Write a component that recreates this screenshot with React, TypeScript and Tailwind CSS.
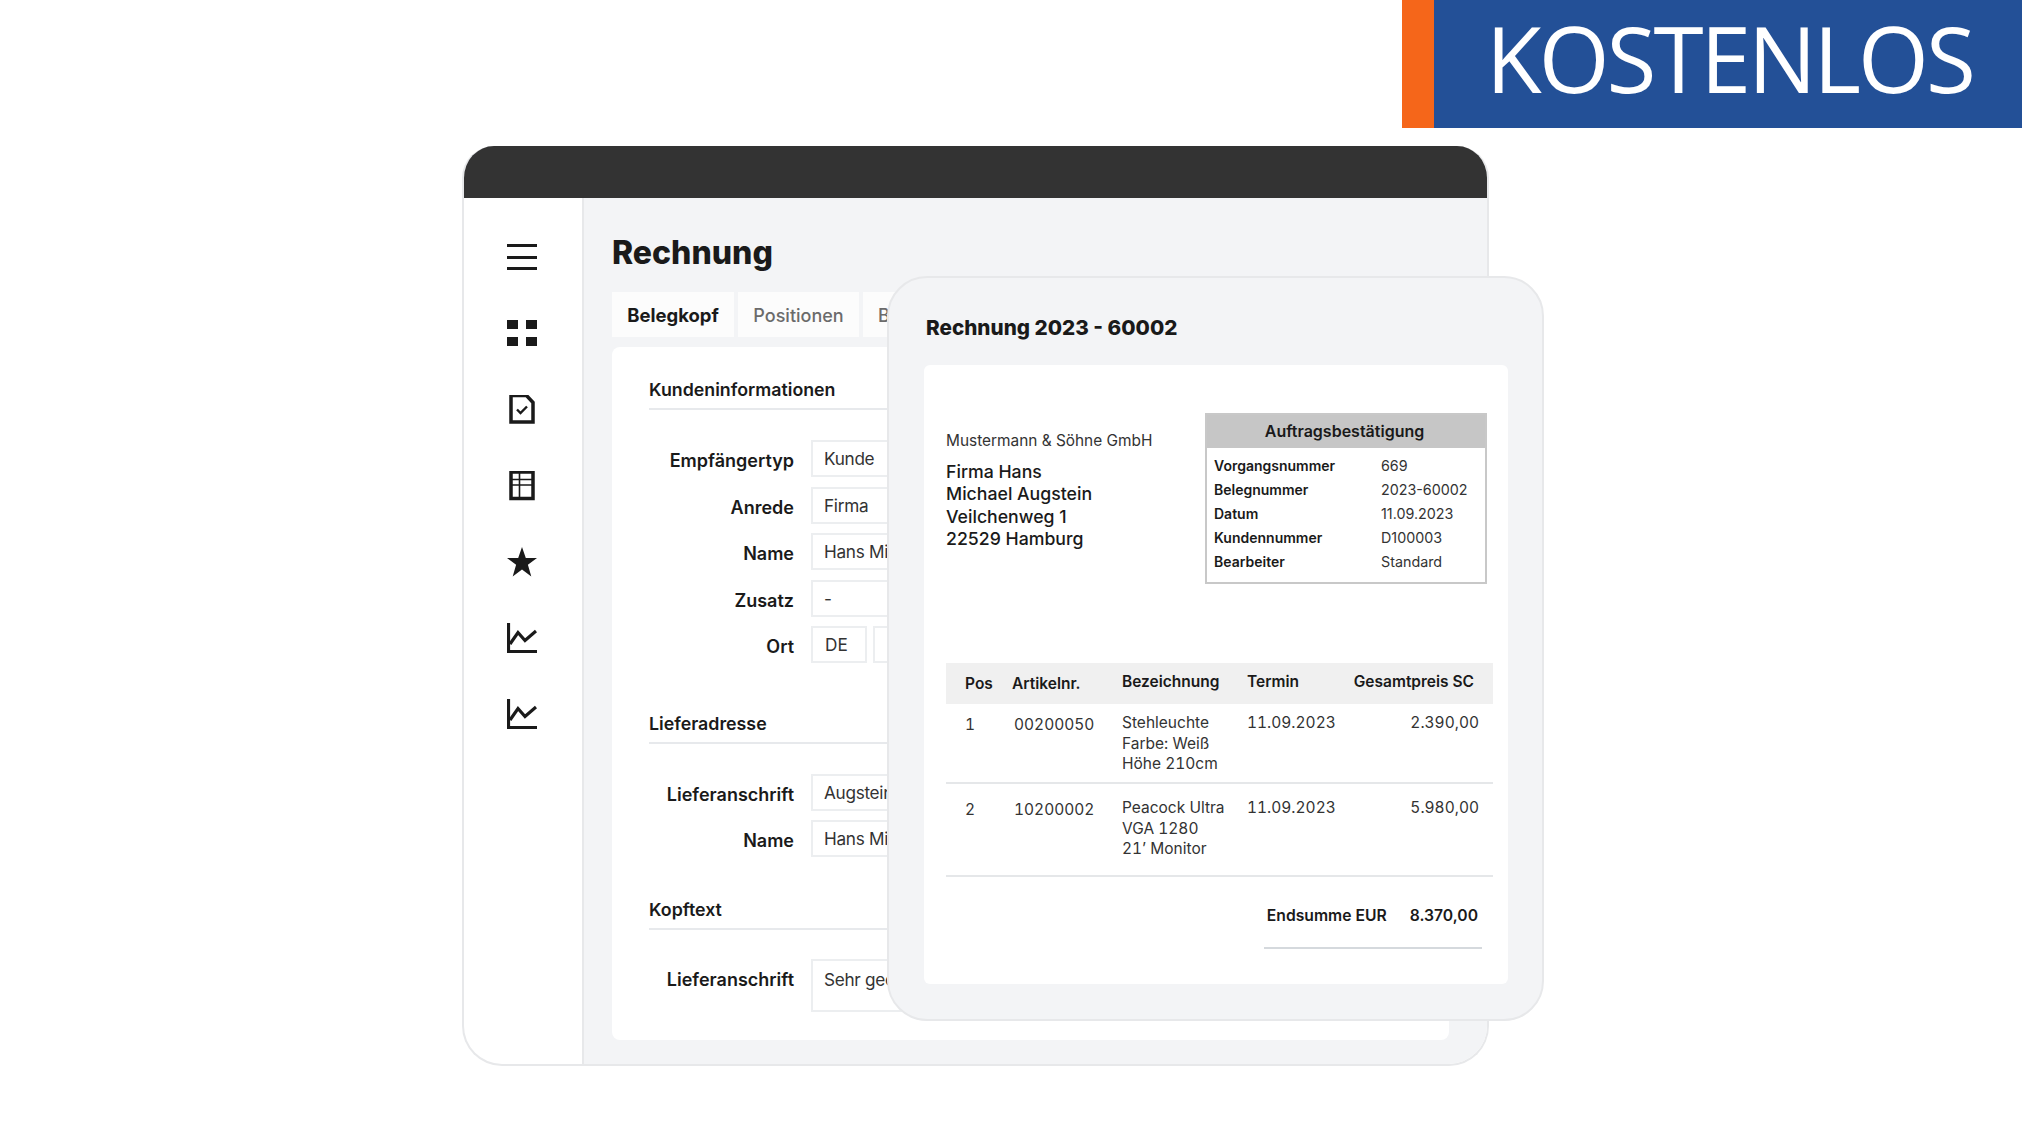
const kunde = [
  { label: 'Empfängertyp', value: 'Kunde' },
  { label: 'Anrede', value: 'Firma' },
  { label: 'Name', value: 'Hans Michael Augstein' },
  { label: 'Zusatz', value: '-' },
]

const belegDaten = [
  ['Vorgangsnummer', '669'],
  ['Belegnummer', '2023-60002'],
  ['Datum', '11.09.2023'],
  ['Kundennummer', 'D100003'],
  ['Bearbeiter', 'Standard'],
]

function MenuIcon() {
  return (
    <svg width="30" height="30" viewBox="0 0 30 30" fill="#1a1a1a">
      <rect x="0" y="1" width="30" height="3" />
      <rect x="0" y="13" width="30" height="3" />
      <rect x="0" y="24" width="30" height="3" />
    </svg>
  )
}

function GridIcon() {
  return (
    <svg width="30" height="30" viewBox="0 0 30 30" fill="#1a1a1a">
      <rect x="0" y="1" width="11" height="9" />
      <rect x="19" y="1" width="11" height="9" />
      <rect x="0" y="18" width="11" height="9" />
      <rect x="19" y="18" width="11" height="9" />
    </svg>
  )
}

function DocIcon() {
  return (
    <svg width="30" height="30" viewBox="0 1 30 30" fill="none" stroke="#1a1a1a">
      <path d="M4 1.5H19.5L26 8.5V28H4Z" strokeWidth="3.5" />
      <path d="M10 15.5L13.5 19L20 12.5" strokeWidth="2.4" />
    </svg>
  )
}

function TableIcon() {
  return (
    <svg width="30" height="30" viewBox="0 1 30 30" fill="none" stroke="#1a1a1a">
      <rect x="4" y="2" width="22" height="26.5" strokeWidth="3.5" />
      <path d="M4 9.5H26M4 15H26M12.5 2V28" strokeWidth="1.6" />
    </svg>
  )
}

function StarIcon() {
  return (
    <svg width="30" height="30" viewBox="0 0 30 30" fill="#1a1a1a">
      <path d="M15 0L18.8 10.9H30L20.9 17.8L24.3 29.5L15 22.4L5.7 29.5L9.1 17.8L0 10.9H11.2Z" />
    </svg>
  )
}

function ChartIcon() {
  return (
    <svg width="30" height="30" viewBox="0 0 30 30" fill="none" stroke="#1a1a1a" strokeWidth="3.2">
      <path d="M1.5 0V28.5H30" />
      <path d="M3 21L11 9.5L18 17.5L29 8" />
    </svg>
  )
}

function SectionTitle({ children }: { children: string }) {
  return (
    <div className="border-b-2 border-[#e7e9ec] pb-[6px] text-[17.8px] leading-[24px] font-semibold text-[#1a1a1a]">
      {children}
    </div>
  )
}

function FormRow({ label, value, tall }: { label: string; value: string; tall?: boolean }) {
  return (
    <div className="flex">
      <div className="w-[145px] pt-[8px] text-right text-[18px] leading-[26px] font-semibold text-[#1a1a1a]">
        {label}
      </div>
      <div
        className={`ml-[17px] w-[480px] border-2 border-[#eceef0] pl-[11px] text-[17.2px] tracking-[-0.3px] whitespace-nowrap text-[#333] ${
          tall ? 'h-[53px] pt-[5px] leading-[28px]' : 'h-[37px] pt-[1px] leading-[31px]'
        }`}
      >
        {value}
      </div>
    </div>
  )
}

function Position({ pos, nr, lines, preis }: { pos: string; nr: string; lines: string[]; preis: string }) {
  return (
    <div className="grid grid-cols-[66px_110px_125px_1fr] text-[15.5px] leading-[20.5px] text-[#333] tabular-nums">
      <div className="pt-[2px] pl-[19px]">{pos}</div>
      <div className="pt-[2px] pl-[2px]">{nr}</div>
      <div>
        {lines.map((l) => (
          <div key={l}>{l}</div>
        ))}
      </div>
      <div className="flex justify-between pr-[14px]">
        <span>11.09.2023</span>
        <span>{preis}</span>
      </div>
    </div>
  )
}

export default function App() {
  return (
    <div className="h-[1128px] overflow-hidden bg-white font-['Inter',sans-serif]">
      <div className="flex justify-end">
        <div className="h-[128px] w-[32px] bg-[#f5661a]" />
        <div className="h-[128px] w-[588px] bg-[#235097] pl-[52px] font-['Open_Sans',sans-serif] text-[91px] leading-[116px] tracking-[-3px] text-white">
          KOSTENLOS
        </div>
      </div>

      <div className="relative mt-[18px] ml-[462px] w-[1027px]">
        <div className="h-[920px] overflow-hidden rounded-t-[32px] rounded-b-[40px] border-2 border-t-0 border-[#e7e8ea]">
          <div className="-mx-[2px] h-[52px] bg-[#333333]" />
          <div className="flex h-[868px]">
            <div className="flex w-[120px] shrink-0 flex-col items-center gap-[46px] border-r-2 border-[#e7e8ea] pt-[45px] pr-[2px]">
              <MenuIcon />
              <GridIcon />
              <DocIcon />
              <TableIcon />
              <StarIcon />
              <ChartIcon />
              <ChartIcon />
            </div>
            <div className="flex-1 bg-[#f3f4f6] pt-[35px] pr-[38px] pl-[28px]">
              <h1 className="h-[40px] text-[32px] leading-[40px] font-extrabold text-[#1a1a1a]">Rechnung</h1>
              <div className="mt-[19px] flex gap-[4px] leading-[47px]">
                <div className="h-[45px] w-[122px] bg-[#fcfcfc] text-center text-[18.5px] font-bold text-[#1a1a1a]">
                  Belegkopf
                </div>
                <div className="h-[45px] w-[121px] bg-[#fcfcfc] text-center text-[18px] font-medium text-[#6b6b6b]">
                  Positionen
                </div>
                <div className="h-[45px] w-[121px] bg-[#fcfcfc] pl-[15px] text-[18px] font-medium text-[#6b6b6b]">
                  Belegtext
                </div>
              </div>
              <div className="mt-[10px] h-[693px] rounded-[8px] bg-white pt-[31px] pr-[30px] pl-[37px]">
                <SectionTitle>Kundeninformationen</SectionTitle>
                <div className="mt-[30px] flex flex-col gap-[9.5px]">
                  {kunde.map((k) => (
                    <FormRow key={k.label} label={k.label} value={k.value} />
                  ))}
                  <div className="flex">
                    <div className="w-[145px] pt-[8px] text-right text-[18px] leading-[26px] font-semibold text-[#1a1a1a]">
                      Ort
                    </div>
                    <div className="ml-[17px] h-[37px] w-[56px] border-2 border-[#eceef0] pt-[1px] pl-[12px] text-[17.2px] leading-[31px] text-[#333]">
                      DE
                    </div>
                    <div className="ml-[6px] h-[37px] w-[300px] border-2 border-[#eceef0]" />
                  </div>
                </div>

                <div className="mt-[49px]">
                  <SectionTitle>Lieferadresse</SectionTitle>
                </div>
                <div className="mt-[30px] flex flex-col gap-[9px]">
                  <FormRow label="Lieferanschrift" value="Augstein Michael" />
                  <FormRow label="Name" value="Hans Michael Augstein" />
                </div>

                <div className="mt-[41px]">
                  <SectionTitle>Kopftext</SectionTitle>
                </div>
                <div className="mt-[29px]">
                  <FormRow label="Lieferanschrift" value="Sehr geehrte Damen und Herren" tall />
                </div>
              </div>
            </div>
          </div>
        </div>

        {/* Beleg-Vorschau liegt über dem Fenster */}
        <div className="absolute top-[130px] left-[425px] h-[745px] w-[657px] rounded-[40px] border-2 border-[#e7e8ea] bg-[#f3f4f6] pr-[34px] pl-[35px]">
          <div className="h-[87px] pt-[36px] pl-[2px] text-[20.7px] leading-[28px] font-extrabold text-[#1a1a1a]">
            Rechnung 2023 - 60002
          </div>
          <div className="h-[619px] rounded-[6px] bg-white">
            <div className="flex h-[298px] pl-[22px]">
              <div className="w-[259px] pt-[66px]">
                <div className="text-[15.4px] leading-[20px] text-[#333]">Mustermann &amp; Söhne GmbH</div>
                <div className="mt-[10px] text-[17.7px] leading-[22.3px] font-medium text-[#1a1a1a]">
                  <div>Firma Hans</div>
                  <div>Michael Augstein</div>
                  <div>Veilchenweg 1</div>
                  <div>22529 Hamburg</div>
                </div>
              </div>
              <div className="mt-[48px] h-[171px] w-[282px] border-2 border-[#c8c8c8]">
                <div className="h-[33px] bg-[#c6c6c6] pr-[3px] text-center text-[16px] leading-[33px] font-semibold text-[#1a1a1a]">
                  Auftragsbestätigung
                </div>
                <div className="pt-[6px] pl-[7px] leading-[24px] text-[#333]">
                  {belegDaten.map(([k, v]) => (
                    <div key={k} className="flex">
                      <div className="w-[167px] text-[14px] font-semibold text-[#1a1a1a]">{k}</div>
                      <div className="text-[14.3px]">{v}</div>
                    </div>
                  ))}
                </div>
              </div>
            </div>

            <div className="mr-[15px] ml-[22px]">
              <div className="grid h-[41px] grid-cols-[66px_110px_125px_1fr] items-center bg-[#f0f0f0] pr-[19px] text-[15.5px] leading-[20px] font-semibold text-[#1a1a1a]">
                <div className="pl-[19px]">Pos</div>
                <div>Artikelnr.</div>
                <div className="pb-[3px]">Bezeichnung</div>
                <div className="flex justify-between pb-[3px]">
                  <span>Termin</span>
                  <span>Gesamtpreis SC</span>
                </div>
              </div>
              <div className="h-[80px] border-b-2 border-[#e5e7e9] pt-[9px]">
                <Position pos="1" nr="00200050" lines={['Stehleuchte', 'Farbe: Weiß', 'Höhe 210cm']} preis="2.390,00" />
              </div>
              <div className="h-[93px] border-b-2 border-[#e5e7e9] pt-[14px]">
                <Position pos="2" nr="10200002" lines={['Peacock Ultra', 'VGA 1280', '21’ Monitor']} preis="5.980,00" />
              </div>
              <div className="flex justify-end gap-[23px] pt-[28px] pr-[15px] text-[15.7px] leading-[22px] font-semibold text-[#1a1a1a]">
                <span>Endsumme EUR</span>
                <span>8.370,00</span>
              </div>
              <div className="mt-[20px] ml-[318px] h-[2px] w-[218px] bg-[#d5d9dd]" />
            </div>
          </div>
        </div>
      </div>
    </div>
  )
}
